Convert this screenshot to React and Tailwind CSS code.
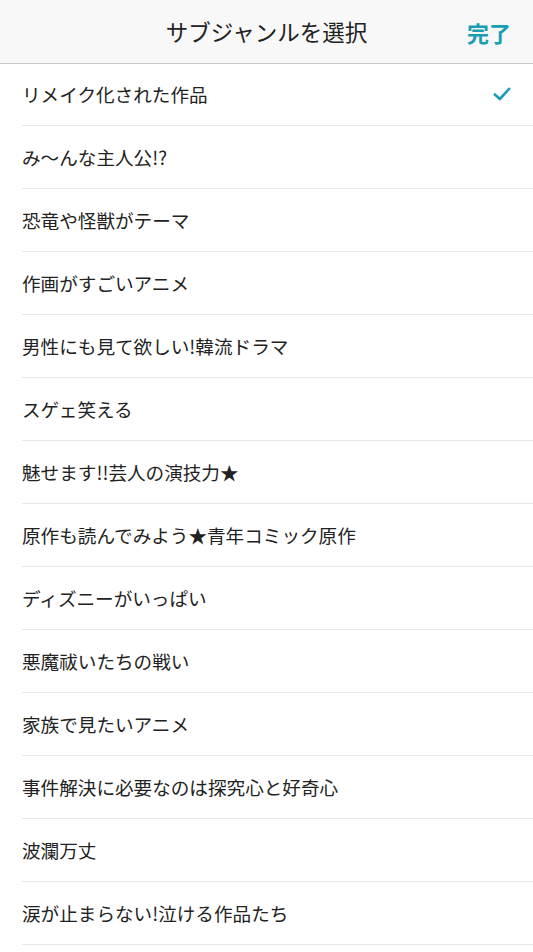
import React from "react";

const items = [
  "リメイク化された作品",
  "み〜んな主人公!?",
  "恐竜や怪獣がテーマ",
  "作画がすごいアニメ",
  "男性にも見て欲しい!韓流ドラマ",
  "スゲェ笑える",
  "魅せます!!芸人の演技力★",
  "原作も読んでみよう★青年コミック原作",
  "ディズニーがいっぱい",
  "悪魔祓いたちの戦い",
  "家族で見たいアニメ",
  "事件解決に必要なのは探究心と好奇心",
  "波瀾万丈",
  "涙が止まらない!泣ける作品たち",
];

export default function App() {
  return (
    <div
      className="w-[533px] h-[952px] overflow-hidden bg-white text-[#222]"
      style={{ fontFamily: '"Noto Sans CJK JP", "Noto Sans", sans-serif' }}
    >
      <div className="relative h-[64px] bg-[#f8f8f8] border-b border-[#c8c8c8] flex items-center justify-center">
        <span className="text-[22.5px] text-[#222]">サブジャンルを選択</span>
        <span className="absolute right-[22px] top-1/2 -translate-y-1/2 text-[22px] font-bold text-[#1a9db2]">
          完了
        </span>
      </div>
      <ul className="pl-[22px] -mt-px">
        {items.map((t, i) => (
          <li
            key={i}
            className="h-[63px] border-b border-[#e8e8e8] flex items-center justify-between pr-[22px]"
          >
            <span className="text-[18.6px]">{t}</span>
            {i === 0 && (
              <svg width="18" height="14" viewBox="0 0 18 14" fill="none">
                <path d="M1.8 7.5 L6.8 12 L16.2 1.8" stroke="#1a9db2" strokeWidth="2.6" strokeLinecap="round" strokeLinejoin="round" />
              </svg>
            )}
          </li>
        ))}
      </ul>
    </div>
  );
}
